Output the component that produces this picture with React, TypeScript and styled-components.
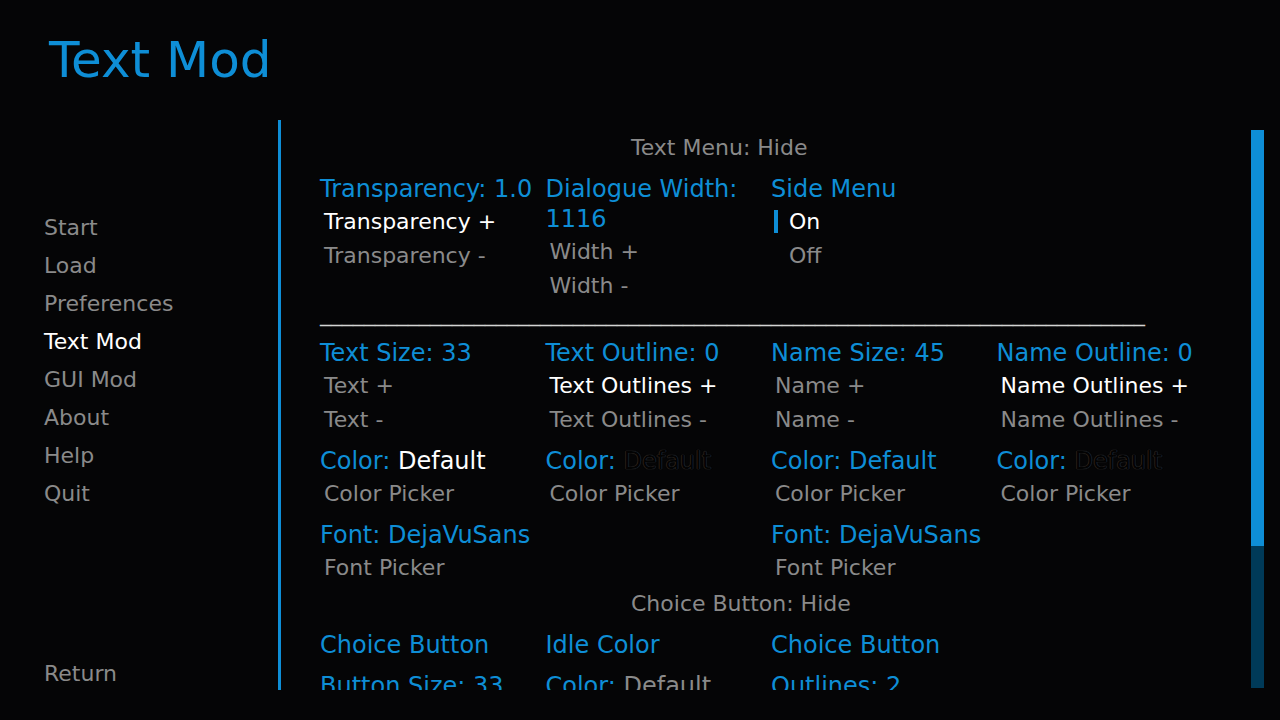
import styled, { createGlobalStyle } from "styled-components";

const BLUE = "#0e8ed6";
const GREY = "#8a8a8a";

const GlobalStyle = createGlobalStyle`
  html, body {
    margin: 0;
    padding: 0;
    background: #050506;
  }
  body {
    font-family: "DejaVu Sans", "Liberation Sans", sans-serif;
  }
`;

const Screen = styled.div`
  width: 1280px;
  height: 720px;
  overflow: hidden;
  background: #050506;
  display: grid;
  grid-template-rows: 120px 600px;
`;

const Title = styled.h1`
  margin: 0;
  padding-left: 49px;
  font-size: 50px;
  font-weight: normal;
  line-height: 120px;
  color: ${BLUE};
`;

const Main = styled.div`
  display: flex;
  align-items: flex-start;
`;

const Nav = styled.nav`
  width: 278px;
  height: 581px;
  box-sizing: border-box;
  padding: 89px 0 8px 44px;
  display: flex;
  flex-direction: column;
`;

const NavItem = styled.div<{ $active?: boolean; $bottom?: boolean }>`
  font-size: 22px;
  line-height: 38px;
  color: ${(p) => (p.$active ? "#ffffff" : GREY)};
  margin-top: ${(p) => (p.$bottom ? "auto" : "0")};
`;

const Divider = styled.div`
  width: 3px;
  height: 570px;
  background: ${BLUE};
`;

const Viewport = styled.div`
  flex: 1;
  height: 570px;
  overflow: hidden;
  box-sizing: border-box;
  padding: 11px 0 0 39px;
`;

const Note = styled.div<{ $gap?: number }>`
  padding-left: 311px;
  margin-top: ${(p) => p.$gap ?? 0}px;
  font-size: 22px;
  line-height: 34px;
  color: ${GREY};
`;

const Grid = styled.div<{ $gap?: number; $top?: number }>`
  display: grid;
  grid-template-columns: repeat(4, 225.5px);
  row-gap: ${(p) => p.$gap ?? 9}px;
  margin-top: ${(p) => p.$top ?? 0}px;
`;

const Cell = styled.div`
  display: flex;
  flex-direction: column;
  min-width: 0;
`;

const Label = styled.div`
  font-size: 24px;
  line-height: 30px;
  color: ${BLUE};
  margin-bottom: 1px;
  padding-right: 4px;
`;

const Value = styled.span<{ $tone: "white" | "grey" | "dark" }>`
  color: ${(p) =>
    p.$tone === "white" ? "#ffffff" : p.$tone === "grey" ? GREY : "#030303"};
  text-shadow: ${(p) =>
    p.$tone === "dark" ? "0 0 1px #3a3a3a, 0 0 1px #3a3a3a" : "none"};
`;

const TextButton = styled.div<{ $active?: boolean }>`
  font-size: 22px;
  line-height: 34px;
  padding-left: 4px;
  white-space: nowrap;
  color: ${(p) => (p.$active ? "#ffffff" : GREY)};
`;

const RadioButton = styled.div<{ $selected?: boolean }>`
  position: relative;
  font-size: 22px;
  line-height: 34px;
  padding-left: 18px;
  color: ${(p) => (p.$selected ? "#ffffff" : GREY)};

  &::before {
    content: "";
    display: ${(p) => (p.$selected ? "block" : "none")};
    position: absolute;
    left: 3px;
    top: 5px;
    width: 4px;
    height: 23px;
    background: ${BLUE};
  }
`;

const Rule = styled.div`
  font-size: 22px;
  line-height: 22px;
  height: 22px;
  margin-bottom: 13px;
  color: #d4d4d4;
  white-space: nowrap;
`;

const Scrollbar = styled.div`
  width: 13px;
  height: 558px;
  margin: 10px 16px 0 0;
  background: #003a58;
  display: flex;
  flex-direction: column;
`;

const Thumb = styled.div`
  background: ${BLUE};
`;

const navItems = ["Start", "Load", "Preferences", "Text Mod", "GUI Mod", "About", "Help", "Quit"];

const styleCells = [
  { label: "Text Size: 33", plus: "Text +", minus: "Text -", active: false },
  { label: "Text Outline: 0", plus: "Text Outlines +", minus: "Text Outlines -", active: true },
  { label: "Name Size: 45", plus: "Name +", minus: "Name -", active: false },
  { label: "Name Outline: 0", plus: "Name Outlines +", minus: "Name Outlines -", active: true },
];

const colorCells: { tone: "white" | "grey" | "dark" | "blue" }[] = [
  { tone: "white" },
  { tone: "dark" },
  { tone: "blue" },
  { tone: "dark" },
];

const App = () => (
  <>
    <GlobalStyle />
    <Screen>
      <Title>Text Mod</Title>
      <Main>
        <Nav>
          {navItems.map((item) => (
            <NavItem key={item} $active={item === "Text Mod"}>
              {item}
            </NavItem>
          ))}
          <NavItem $bottom>Return</NavItem>
        </Nav>
        <Divider />
        <Viewport>
          <Note>Text Menu: Hide</Note>
          <Grid $top={9}>
            <Cell>
              <Label>Transparency: 1.0</Label>
              <TextButton $active>Transparency +</TextButton>
              <TextButton>Transparency -</TextButton>
            </Cell>
            <Cell>
              <Label>Dialogue Width: 1116</Label>
              <TextButton>Width +</TextButton>
              <TextButton>Width -</TextButton>
            </Cell>
            <Cell>
              <Label>Side Menu</Label>
              <RadioButton $selected>On</RadioButton>
              <RadioButton>Off</RadioButton>
            </Cell>
          </Grid>
          <Rule>{"_".repeat(75)}</Rule>
          <Grid>
            {styleCells.map((c) => (
              <Cell key={c.label}>
                <Label>{c.label}</Label>
                <TextButton $active={c.active}>{c.plus}</TextButton>
                <TextButton>{c.minus}</TextButton>
              </Cell>
            ))}
            {colorCells.map((c, i) => (
              <Cell key={i}>
                <Label>
                  Color:{" "}
                  {c.tone === "blue" ? "Default" : <Value $tone={c.tone}>Default</Value>}
                </Label>
                <TextButton>Color Picker</TextButton>
              </Cell>
            ))}
            <Cell>
              <Label>Font: DejaVuSans</Label>
              <TextButton>Font Picker</TextButton>
            </Cell>
            <Cell />
            <Cell>
              <Label>Font: DejaVuSans</Label>
              <TextButton>Font Picker</TextButton>
            </Cell>
            <Cell />
          </Grid>
          <Note $gap={2}>Choice Button: Hide</Note>
          <Grid $top={9} $gap={10}>
            <Label>Choice Button</Label>
            <Label>Idle Color</Label>
            <Label>Choice Button</Label>
            <Cell />
            <Label>Button Size: 33</Label>
            <Label>
              Color: <Value $tone="grey">Default</Value>
            </Label>
            <Label>Outlines: 2</Label>
            <Cell />
          </Grid>
        </Viewport>
        <Scrollbar>
          <Thumb style={{ height: `${(416 / 558) * 100}%` }} />
        </Scrollbar>
      </Main>
    </Screen>
  </>
);

export default App;
